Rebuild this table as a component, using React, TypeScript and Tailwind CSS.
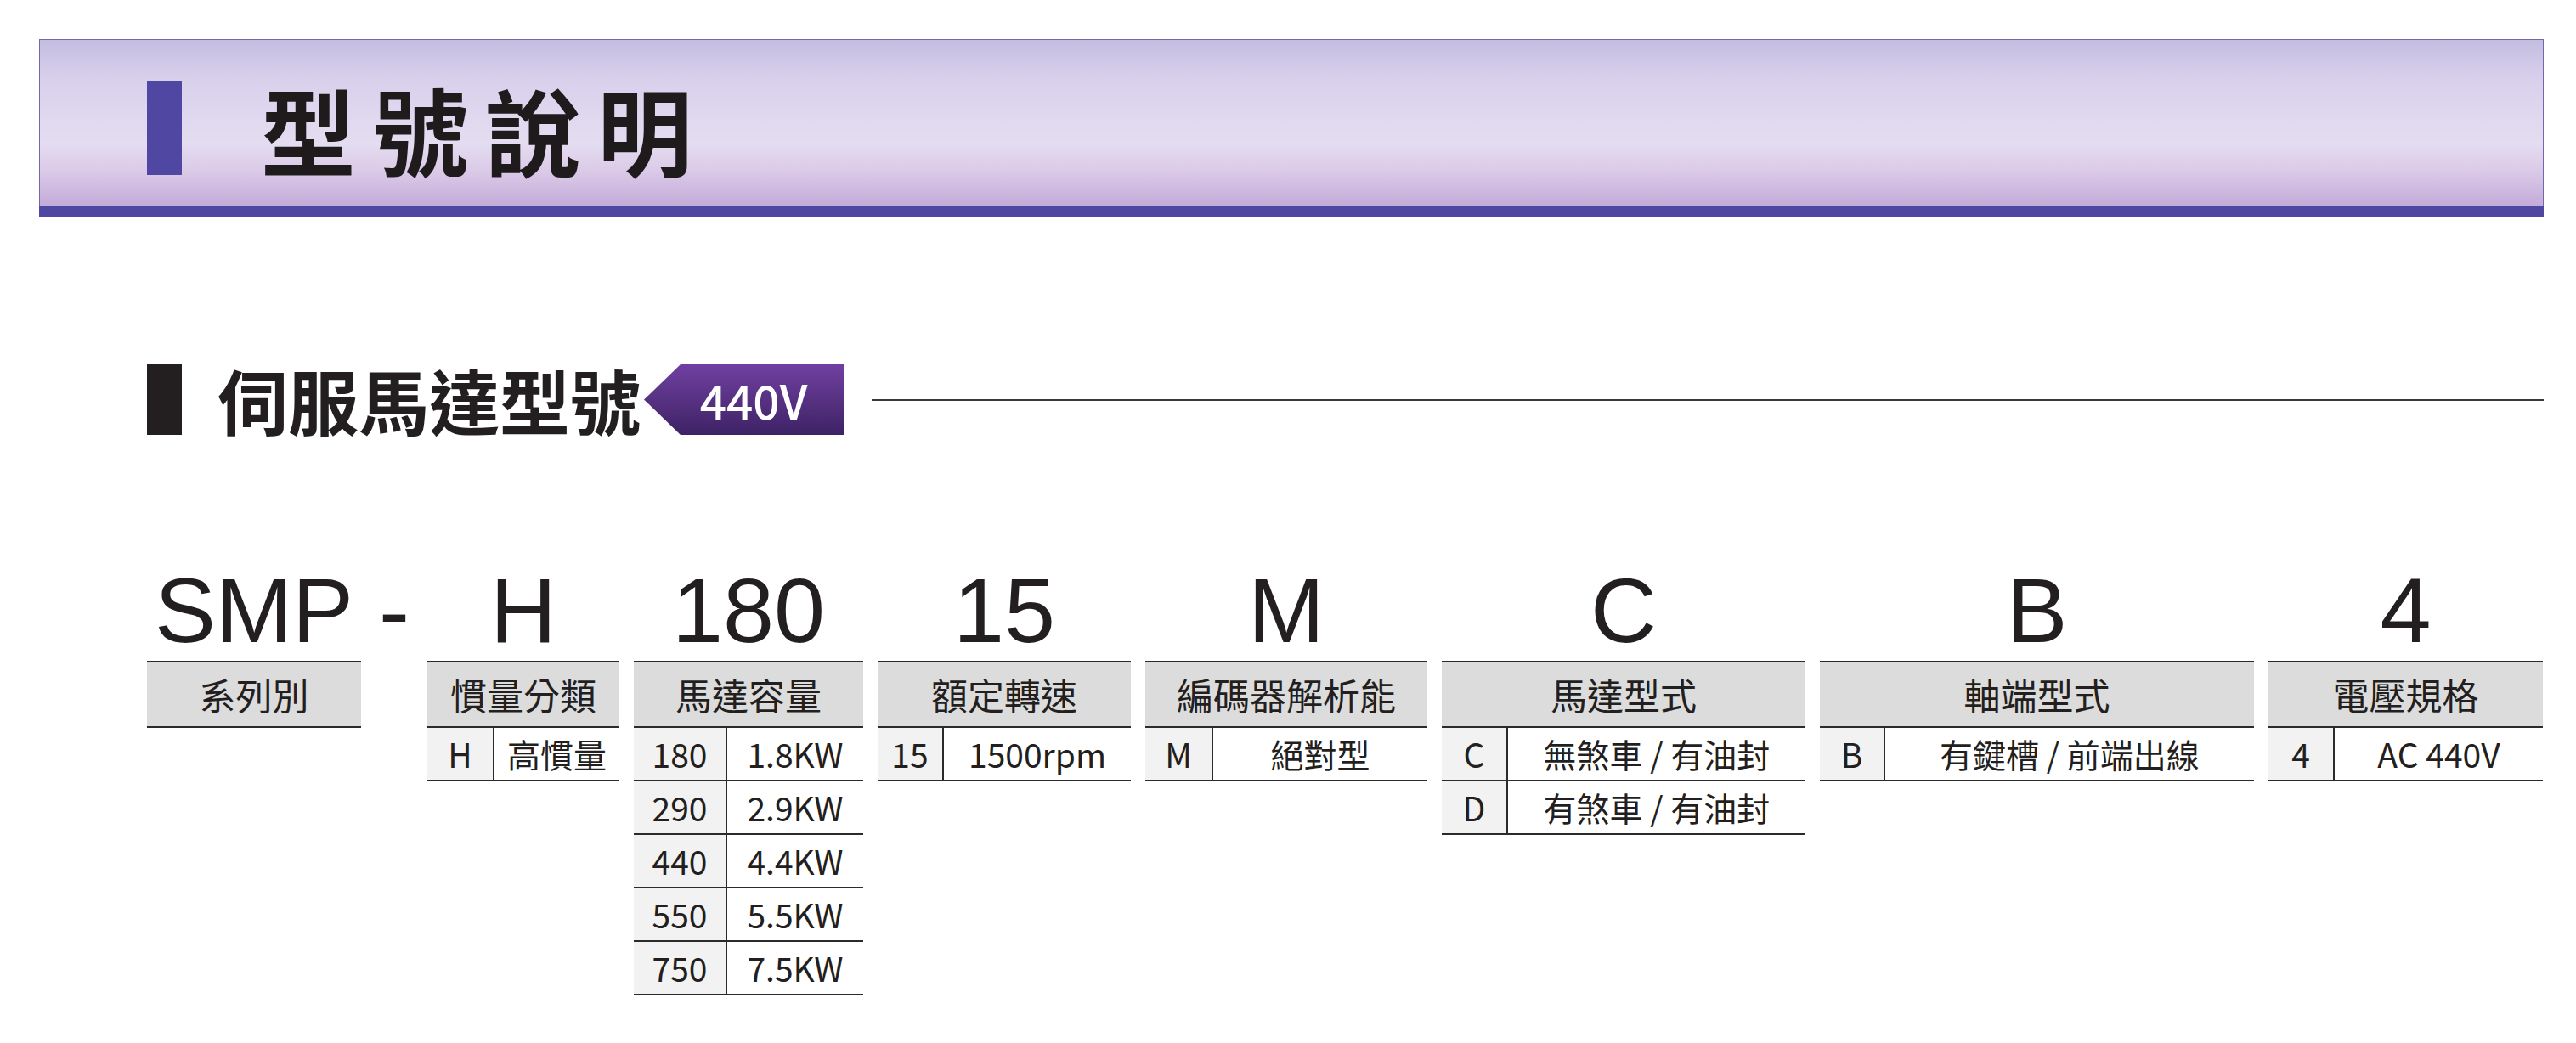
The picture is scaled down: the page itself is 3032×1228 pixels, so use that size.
import React from "react";

// ─── Types ───────────────────────────────────────────────

interface Row {
  code: string;
  label: string;
}

interface Segment {
  mark: string;
  title: string;
  width: string;
  codeWidth: string;
  rows: Row[];
}

// ─── Data ────────────────────────────────────────────────

const SEGMENTS: Segment[] = [
  { mark: "SMP", title: "系列別", width: "w-[252px]", codeWidth: "w-[78px]", rows: [] },
  {
    mark: "H",
    title: "慣量分類",
    width: "w-[226px]",
    codeWidth: "w-[79px]",
    rows: [{ code: "H", label: "高慣量" }],
  },
  {
    mark: "180",
    title: "馬達容量",
    width: "w-[270px]",
    codeWidth: "w-[110px]",
    rows: [
      { code: "180", label: "1.8KW" },
      { code: "290", label: "2.9KW" },
      { code: "440", label: "4.4KW" },
      { code: "550", label: "5.5KW" },
      { code: "750", label: "7.5KW" },
    ],
  },
  {
    mark: "15",
    title: "額定轉速",
    width: "w-[298px]",
    codeWidth: "w-[78px]",
    rows: [{ code: "15", label: "1500rpm" }],
  },
  {
    mark: "M",
    title: "編碼器解析能",
    width: "w-[332px]",
    codeWidth: "w-[80px]",
    rows: [{ code: "M", label: "絕對型" }],
  },
  {
    mark: "C",
    title: "馬達型式",
    width: "w-[428px]",
    codeWidth: "w-[78px]",
    rows: [
      { code: "C", label: "無煞車 / 有油封" },
      { code: "D", label: "有煞車 / 有油封" },
    ],
  },
  {
    mark: "B",
    title: "軸端型式",
    width: "w-[511px]",
    codeWidth: "w-[77px]",
    rows: [{ code: "B", label: "有鍵槽 / 前端出線" }],
  },
  {
    mark: "4",
    title: "電壓規格",
    width: "w-[323px]",
    codeWidth: "w-[78px]",
    rows: [{ code: "4", label: "AC 440V" }],
  },
];

// ─── Pieces ──────────────────────────────────────────────

function BigMark({ children }: { children: React.ReactNode }) {
  return (
    <div className="h-[113px] text-center font-['Liberation_Sans',Arial,sans-serif] text-[108px] leading-none text-[#231f20]">
      {children}
    </div>
  );
}

function SegmentColumn({ seg }: { seg: Segment }) {
  return (
    <div className={`${seg.width} flex flex-col`}>
      <BigMark>{seg.mark}</BigMark>
      <div className="border-t-2 border-[#2b2b2b]">
        {/* Header */}
        <div className="flex h-[77px] items-center justify-center border-b-2 border-[#2b2b2b] bg-[#dcdcdc] text-[43px] text-[#231f20]">
          {seg.title}
        </div>
        {/* Rows */}
        {seg.rows.map((row) => (
          <div key={row.code} className="flex h-[63px] border-b-2 border-[#2b2b2b] text-[39px] text-[#231f20]">
            <div className={`${seg.codeWidth} flex items-center justify-center border-r-2 border-[#2b2b2b] bg-[#f2f2f2]`}>
              {row.code}
            </div>
            <div className="flex flex-1 items-center justify-center">{row.label}</div>
          </div>
        ))}
      </div>
    </div>
  );
}

// ─── Page ────────────────────────────────────────────────

export default function App() {
  return (
    <div className="h-[1228px] w-[3032px] overflow-hidden bg-white pt-[46px] font-['Noto_Sans_CJK_TC','Noto_Sans',sans-serif] text-[#231f20]">
      {/* Banner */}
      <div className="ml-[46px] w-[2948px]">
        <div className="flex h-[196px] items-center border-x border-t border-[#7268b0] bg-[linear-gradient(180deg,#c4bde0_0%,#d9d1ec_25%,#e4ddf1_62%,#dccbe8_78%,#c3acd9_100%)] pt-[12px] pl-[126px]">
          <div className="h-[111px] w-[41px] bg-[#4f47a1]" />
          <h1 className="ml-[93px] text-[112px] font-bold leading-none tracking-[20px] text-[#1f1b1c]">
            型號說明
          </h1>
        </div>
        <div className="h-[13px] bg-[#4f47a1]" />
      </div>

      {/* Section heading */}
      <div className="ml-[173px] mt-[174px] flex h-[83px] w-[2821px] items-center">
        <div className="h-[83px] w-[41px] bg-[#231f20]" />
        <h2 className="ml-[42px] text-[83px] font-bold leading-none text-[#231f20]">伺服馬達型號</h2>
        <div className="ml-[4px] flex h-[83px] w-[235px] items-center justify-center bg-[linear-gradient(180deg,#6f40a2_0%,#55307f_55%,#3d2266_100%)] pl-[43px] pr-[20px] [clip-path:polygon(43px_0,100%_0,100%_100%,43px_100%,0_50%)]">
          <span className="text-[55px] font-medium leading-none text-white">440V</span>
        </div>
        <div className="ml-[33px] h-[2px] flex-1 bg-[#3a3a3a]" />
      </div>

      {/* Model code breakdown */}
      <div className="ml-[173px] mt-[153px] flex w-[2821px] gap-[17px]">
        <SegmentColumn seg={SEGMENTS[0]} />
        <div className="w-[44px]">
          <BigMark>-</BigMark>
        </div>
        {SEGMENTS.slice(1).map((seg) => (
          <SegmentColumn key={seg.title} seg={seg} />
        ))}
      </div>
    </div>
  );
}
